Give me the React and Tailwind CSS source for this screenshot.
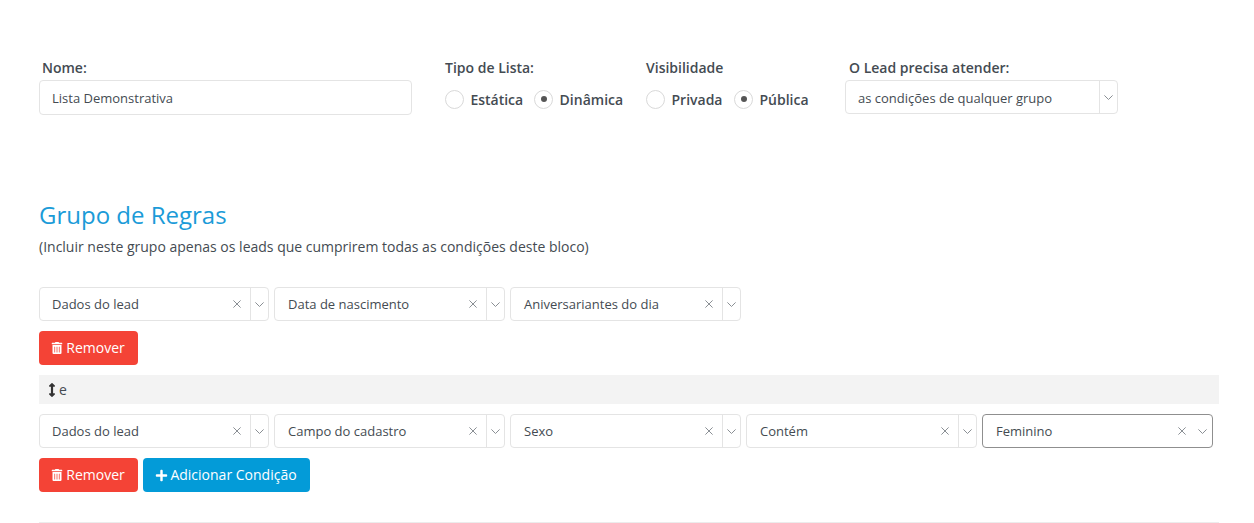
import { FaArrowsAltV, FaPlus, FaTrashAlt } from 'react-icons/fa';

const Clear = () => (
    <svg width="8" height="8" viewBox="0 0 8 8" className="shrink-0 text-[#8a8f94]">
        <path d="M0.4 0.4 L7.6 7.6 M7.6 0.4 L0.4 7.6" stroke="currentColor" strokeWidth="1" fill="none" />
    </svg>
);

const Chevron = () => (
    <svg width="9" height="5" viewBox="0 0 9 5" className="shrink-0 text-[#8a8f94]">
        <path d="M0.4 0.4 L4.5 4.5 L8.6 0.4" stroke="currentColor" strokeWidth="1" fill="none" />
    </svg>
);

const Select = ({ value, clearable = true, active = false, className = '', textClassName = 'pl-[13px] pt-[2px]' }) => (
    <div
        className={`flex h-[34px] items-center rounded border bg-white text-[13px] text-[#444b52] ${active ? 'border-[#8f8f8f]' : 'border-[#e4e4e4]'} ${className}`}
    >
        <span className={`flex-1 truncate ${textClassName}`}>{value}</span>
        {clearable && <Clear />}
        {active ? (
            <span className="ml-[12px] mr-[5px] flex items-center">
                <Chevron />
            </span>
        ) : (
            <span className="ml-[9px] flex h-full w-[18px] items-center justify-center border-l border-[#e4e4e4]">
                <Chevron />
            </span>
        )}
    </div>
);

const Radio = ({ label, checked, className = 'gap-[6.5px]' }) => (
    <div className={`flex items-center ${className}`}>
        <span className="flex h-[19px] w-[19px] items-center justify-center rounded-full border border-[#d9d9d9] bg-white">
            {checked && <span className="h-[6px] w-[6px] rounded-full bg-[#555]" />}
        </span>
        <span className="pt-[2px] text-sm font-semibold text-[#444b52]">{label}</span>
    </div>
);

const Remover = () => (
    <button className="flex h-[34px] w-[99px] items-center justify-center gap-[3px] rounded bg-[#f44336] pr-px text-sm text-white">
        <FaTrashAlt className="text-[12px]" />
        Remover
    </button>
);

export default function App() {
    return (
        <div className="h-[523px] overflow-hidden bg-white pl-[39px] pr-[35px] pt-[59px] font-['Open_Sans',sans-serif] text-[#444b52]">
            <div className="flex items-start">
                <div className="w-[373px]">
                    <label className="block h-[21px] pl-[3px] text-sm font-semibold leading-[18px]">Nome:</label>
                    <div className="flex h-[35px] items-center rounded border border-[#e4e4e4] pl-3 pt-[2px] text-[13px]">
                        Lista Demonstrativa
                    </div>
                </div>
                <div className="ml-[33px] w-[201px]">
                    <label className="block h-[21px] text-sm font-semibold leading-[18px]">Tipo de Lista:</label>
                    <div className="flex h-[38px] items-center gap-[11px]">
                        <Radio label="Estática" className="gap-[6.4px]" />
                        <Radio label="Dinâmica" checked className="gap-[6.4px]" />
                    </div>
                </div>
                <div className="w-[199px]">
                    <label className="block h-[21px] text-sm font-semibold leading-[18px]">Visibilidade</label>
                    <div className="flex h-[38px] items-center gap-[11.5px]">
                        <Radio label="Privada" />
                        <Radio label="Pública" checked />
                    </div>
                </div>
                <div className="w-[273px]">
                    <label className="block h-[21px] pl-[4px] text-sm font-semibold leading-[18px]">O Lead precisa atender:</label>
                    <Select value="as condições de qualquer grupo" clearable={false} textClassName="pl-3 pt-[4px]" />
                </div>
            </div>

            <h2 className="mt-[82px] text-2xl leading-[30px] text-[#1b9bd8]">Grupo de Regras</h2>
            <p className="mt-[7px] text-sm leading-[20px]">
                (Incluir neste grupo apenas os leads que cumprirem todas as condições deste bloco)
            </p>

            <div className="mt-[30px] flex gap-[5px]">
                <Select value="Dados do lead" className="w-[230px]" textClassName="pl-3 pt-[2px]" />
                <Select value="Data de nascimento" className="w-[231px]" />
                <Select value="Aniversariantes do dia" className="w-[231px]" />
            </div>
            <div className="mt-[10px] flex">
                <Remover />
            </div>

            <div className="mt-[10px] flex h-[29px] items-center bg-[#f3f3f3] pl-[6px] text-sm">
                <FaArrowsAltV className="text-[14px] text-[#333]" />
                <span>e</span>
            </div>

            <div className="mt-[10px] flex gap-[5px]">
                <Select value="Dados do lead" className="w-[230px]" textClassName="pl-3 pt-[2px]" />
                <Select value="Campo do cadastro" className="w-[231px]" />
                <Select value="Sexo" className="w-[231px]" />
                <Select value="Contém" className="w-[231px]" />
                <Select value="Feminino" active className="w-[231px]" />
            </div>
            <div className="mt-[10px] flex gap-[5px]">
                <Remover />
                <button className="flex h-[34px] w-[167px] items-center justify-center gap-[2px] rounded bg-[#039bd8] pr-px text-sm text-white">
                    <FaPlus className="text-[13px]" />
                    Adicionar Condição
                </button>
            </div>

            <hr className="mt-[30px] border-[#ececec]" />
        </div>
    );
}
